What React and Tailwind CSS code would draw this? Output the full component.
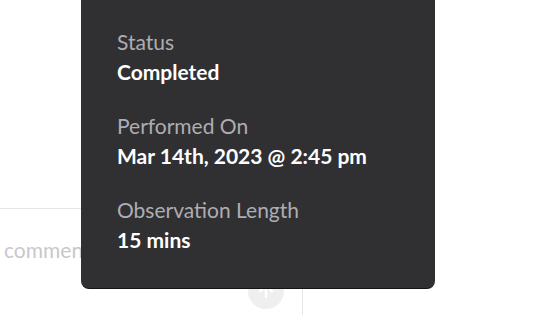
import { ArrowUp } from 'lucide-react';

const DETAILS = [
  { label: 'Status', value: 'Completed' },
  { label: 'Performed On', value: 'Mar 14th, 2023 @ 2:45 pm' },
  { label: 'Observation Length', value: '15 mins' },
];

export default function App() {
  return (
    <div className="relative w-[560px] h-[315px] overflow-hidden bg-white font-['Lato','Liberation_Sans',sans-serif]">
      {/* comment composer underneath */}
      <div className="pt-[208px] flex">
        <div className="w-[303px] h-[107px] border-t border-r border-[#e6e6e8] flex flex-col">
          <div className="pl-[4px] pt-[26px] text-[21px] leading-[30px] text-[#c8c8cc]">comment...</div>
          <div className="flex justify-end pr-[18px] pt-[8px]">
            <div className="w-[36px] h-[36px] rounded-full bg-[#efeff0] flex items-center justify-center">
              <ArrowUp className="w-5 h-5 text-white" strokeWidth={3} />
            </div>
          </div>
        </div>
      </div>

      {/* details popover */}
      <div className="absolute left-[81px] top-[-20px] w-[354px] h-[309px] rounded-[8px] bg-[#29292b]/[0.97] border-b border-black/60 pl-[36px] pt-[47px] flex flex-col gap-[24px]">
        {DETAILS.map((d) => (
          <div key={d.label} className="flex flex-col">
            <span className="text-[21px] leading-[30px] text-[#adadb2]">{d.label}</span>
            <span className="text-[21px] leading-[30px] font-bold text-white">{d.value}</span>
          </div>
        ))}
      </div>
    </div>
  );
}
